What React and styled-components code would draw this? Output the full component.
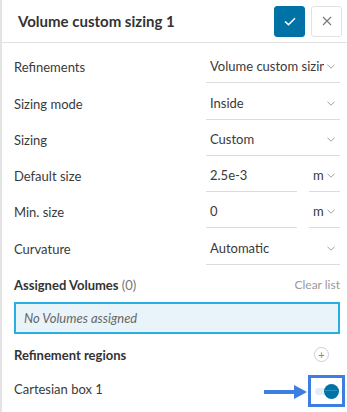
import styled, { createGlobalStyle } from 'styled-components';

const GlobalStyle = createGlobalStyle`
  html, body {
    margin: 0;
    padding: 0;
    background: #fff;
    font-family: Lato, "Liberation Sans", sans-serif;
    color: #3a3a3a;
  }
`;

const Panel = styled.div`
  width: 347px;
  height: 412px;
  box-sizing: border-box;
  border-left: 2px solid #e4e4e4;
  position: relative;
  overflow: hidden;
`;

const Header = styled.div`
  display: flex;
  align-items: center;
  height: 43px;
  box-sizing: border-box;
  padding: 0 5px 0 16px;
  border-bottom: 1px solid #e2e2e2;
`;

const Title = styled.h2`
  flex: 1;
  margin: 0;
  font-size: 15px;
  font-weight: 700;
  color: #333;
`;

const IconButton = styled.button`
  width: 31px;
  height: 31px;
  margin-left: 6px;
  border-radius: 3px;
  display: flex;
  align-items: center;
  justify-content: center;
  padding: 0;
  background: ${({ primary }) => (primary ? '#0072a6' : '#fff')};
  border: 1px solid ${({ primary }) => (primary ? '#0072a6' : '#e2e2e2')};
`;

const Body = styled.div`
  padding: 4px 7px 0 12px;
`;

const Row = styled.div`
  display: flex;
  align-items: flex-end;
  height: 36.3px;
`;

const Label = styled.div`
  flex: 1;
  font-size: 13px;
  line-height: 17px;
  padding-bottom: ${({ flat }) => (flat ? 0 : 7)}px;
  color: #3a3a3a;
`;

const Field = styled.div`
  width: ${({ w }) => w}px;
  margin-left: ${({ gap }) => gap || 0}px;
  box-sizing: border-box;
  padding: 0 0 7px 4px;
  border-bottom: 1px solid #dcdcdc;
  display: flex;
  align-items: center;
  font-size: 13px;
  line-height: 17px;
  color: #3a3a3a;
  white-space: nowrap;
  overflow: hidden;
`;

const FieldText = styled.span`
  flex: 1;
  overflow: hidden;
  text-overflow: clip;
`;

const Chevron = () => (
  <svg width="8" height="5" viewBox="0 0 8 5" style={{ flex: 'none', margin: '0 5px 0 3px' }}>
    <path d="M0.5 0.8l3.5 3.4L7.5 0.8" fill="none" stroke="#a0a0a0" strokeWidth="1" />
  </svg>
);

const SectionHead = styled.div`
  display: flex;
  align-items: center;
  justify-content: space-between;
  height: 34px;
  margin-top: ${({ top }) => top || 0}px;
`;

const SectionTitle = styled.span`
  font-size: 13px;
  font-weight: 700;
  color: #333;
`;

const Count = styled.span`
  font-weight: 400;
  color: #777;
`;

const ClearLink = styled.span`
  font-size: 12px;
  color: #9a9a9a;
`;

const EmptyBox = styled.div`
  height: 32px;
  box-sizing: border-box;
  border: 2px solid #27aee3;
  background: #e9f4fa;
  display: flex;
  align-items: center;
  padding-left: 8px;
  font-size: 13px;
  font-style: italic;
  color: #666;
`;

const AddButton = styled.div`
  width: 13px;
  height: 13px;
  border: 1px solid #cfcfcf;
  border-radius: 50%;
  margin-right: 11px;
  display: flex;
  align-items: center;
  justify-content: center;
  font-size: 11px;
  line-height: 1;
  color: #888;
`;

const ItemRow = styled.div`
  display: flex;
  align-items: center;
  justify-content: space-between;
  height: 36px;
`;

const ToggleWrap = styled.div`
  position: relative;
  width: 24px;
  height: 15px;
  margin: 3px 1px 0 0;
  display: flex;
  align-items: center;
`;

const Track = styled.div`
  width: 18px;
  height: 7px;
  border-radius: 4px;
  background: #e3edf3;
`;

const Knob = styled.div`
  position: absolute;
  right: 0;
  top: 0;
  width: 15px;
  height: 15px;
  border-radius: 50%;
  background: #0072a6;

  &::after {
    content: '';
    position: absolute;
    left: 1px;
    right: 2px;
    top: 6px;
    height: 1.5px;
    background: #2a8fc2;
  }
`;

const Highlight = styled.div`
  position: absolute;
  left: 306px;
  top: 375px;
  width: 37px;
  height: 32px;
  box-sizing: border-box;
  border: 3px solid #3d7fe0;
  pointer-events: none;
`;

const Arrow = styled.svg`
  position: absolute;
  left: 262px;
  top: 384px;
`;

export default function App() {
  return (
    <>
      <GlobalStyle />
      <Panel>
        <Header>
          <Title>Volume custom sizing 1</Title>
          <IconButton primary>
            <svg width="12" height="9" viewBox="0 0 12 9">
              <path d="M1 4.5l3.5 3.2L11 1.2" fill="none" stroke="#fff" strokeWidth="1.6" />
            </svg>
          </IconButton>
          <IconButton>
            <svg width="10" height="10" viewBox="0 0 10 10">
              <path d="M1 1l8 8M9 1l-8 8" stroke="#777" strokeWidth="1.1" />
            </svg>
          </IconButton>
        </Header>
        <Body>
          <Row>
            <Label>Refinements</Label>
            <Field w={134}>
              <FieldText>Volume custom sizing 1</FieldText>
              <Chevron />
            </Field>
          </Row>
          <Row>
            <Label>Sizing mode</Label>
            <Field w={134}>
              <FieldText>Inside</FieldText>
              <Chevron />
            </Field>
          </Row>
          <Row>
            <Label>Sizing</Label>
            <Field w={134}>
              <FieldText>Custom</FieldText>
              <Chevron />
            </Field>
          </Row>
          <Row>
            <Label>Default size</Label>
            <Field w={91}>
              <FieldText>2.5e-3</FieldText>
            </Field>
            <Field w={31} gap={12}>
              <FieldText>m</FieldText>
              <Chevron />
            </Field>
          </Row>
          <Row>
            <Label>Min. size</Label>
            <Field w={91}>
              <FieldText>0</FieldText>
            </Field>
            <Field w={31} gap={12}>
              <FieldText>m</FieldText>
              <Chevron />
            </Field>
          </Row>
          <Row>
            <Label>Curvature</Label>
            <Field w={134}>
              <FieldText>Automatic</FieldText>
              <Chevron />
            </Field>
          </Row>
          <SectionHead top={3}>
            <SectionTitle>
              Assigned Volumes <Count>(0)</Count>
            </SectionTitle>
            <ClearLink>Clear list</ClearLink>
          </SectionHead>
          <EmptyBox>No Volumes assigned</EmptyBox>
          <SectionHead top={4}>
            <SectionTitle>Refinement regions</SectionTitle>
            <AddButton>+</AddButton>
          </SectionHead>
          <ItemRow>
            <Label flat>Cartesian box 1</Label>
            <ToggleWrap>
              <Track />
              <Knob />
            </ToggleWrap>
          </ItemRow>
        </Body>
        <Arrow width="44" height="16" viewBox="0 0 44 16">
          <path d="M0 8h32" stroke="#3d7fe0" strokeWidth="4" />
          <path d="M30 1l13 7-13 7z" fill="#3d7fe0" />
        </Arrow>
        <Highlight />
      </Panel>
    </>
  );
}
